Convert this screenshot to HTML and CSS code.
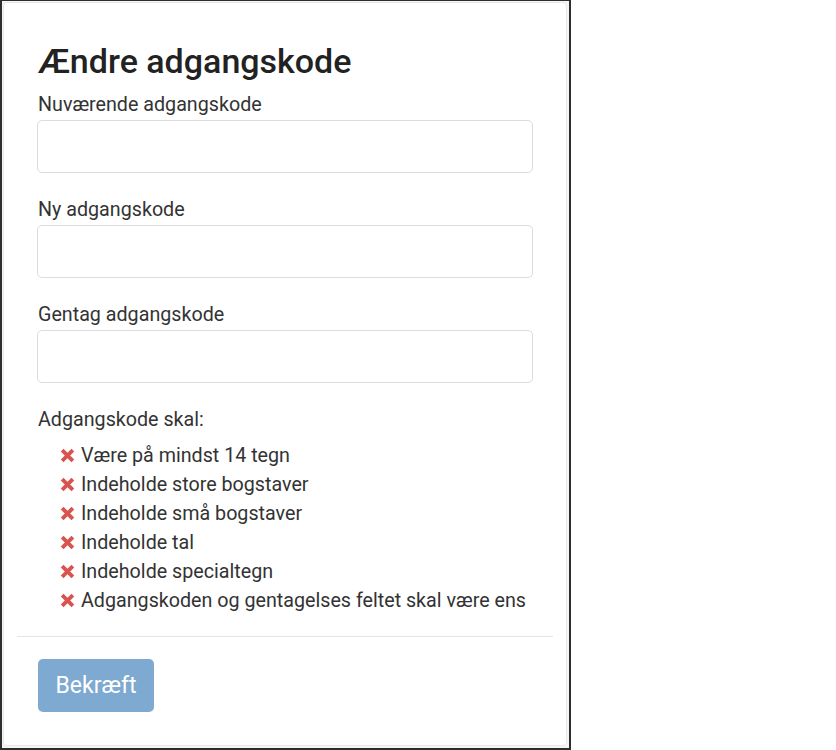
FILE: index.html
```html
<!DOCTYPE html>
<html lang="da">
<head>
<meta charset="utf-8">
<title>Ændre adgangskode</title>
<link rel="stylesheet" href="styles.css">
</head>
<body>
<div class="frame">
  <div class="card">
    <div class="body">
      <h1 class="title">Ændre adgangskode</h1>
      <div class="group">
        <label class="label">Nuværende adgangskode</label>
        <input class="input" type="password">
      </div>
      <div class="group">
        <label class="label">Ny adgangskode</label>
        <input class="input" type="password">
      </div>
      <div class="group">
        <label class="label">Gentag adgangskode</label>
        <input class="input" type="password">
      </div>
      <p class="rules-title">Adgangskode skal:</p>
      <ul class="rules">
        <li><svg class="x" viewBox="0 0 14 14"><path d="M2 2L12 12M12 2L2 12"/></svg>Være på mindst 14 tegn</li>
        <li><svg class="x" viewBox="0 0 14 14"><path d="M2 2L12 12M12 2L2 12"/></svg>Indeholde store bogstaver</li>
        <li><svg class="x" viewBox="0 0 14 14"><path d="M2 2L12 12M12 2L2 12"/></svg>Indeholde små bogstaver</li>
        <li><svg class="x" viewBox="0 0 14 14"><path d="M2 2L12 12M12 2L2 12"/></svg>Indeholde tal</li>
        <li><svg class="x" viewBox="0 0 14 14"><path d="M2 2L12 12M12 2L2 12"/></svg>Indeholde specialtegn</li>
        <li><svg class="x" viewBox="0 0 14 14"><path d="M2 2L12 12M12 2L2 12"/></svg>Adgangskoden og gentagelses feltet skal være ens</li>
      </ul>
    </div>
    <div class="footer">
      <button class="btn" type="button" disabled>Bekræft</button>
    </div>
  </div>
</div>
</body>
</html>
```
FILE: styles.css
```css
html, body {
  margin: 0;
  padding: 0;
  background: #ffffff;
}
body {
  font-family: Roboto, "Liberation Sans", Arial, sans-serif;
  color: #333333;
}
.frame {
  box-sizing: border-box;
  width: 571px;
  height: 750px;
  border: 2px solid #2e2e2e;
  border-top-width: 1px;
  background: #f4f5f6;
  padding: 1px 2px 2px 1px;
}
.card {
  box-sizing: border-box;
  height: 100%;
  background: #ffffff;
  border: 1px solid #e8e8e8;
  border-radius: 4px;
  padding: 0 13px;
}
.body {
  padding: 39px 20px 21px 21px;
  border-bottom: 1px solid #e5e5e5;
}
.title {
  margin: 0 0 11px;
  font-size: 34px;
  font-weight: 500;
  line-height: 38px;
  color: #222222;
}
.group {
  margin-bottom: 23px;
}
.label {
  display: block;
  font-size: 19.7px;
  line-height: 27px;
  margin-bottom: 2px;
  color: #333333;
}
.input {
  display: block;
  box-sizing: border-box;
  width: 496px;
  height: 53px;
  margin: 0 0 0 -1px;
  border: 1px solid #dcdcdc;
  border-radius: 5px;
  background: #ffffff;
  font-size: 18px;
}
.rules-title {
  margin: 0 0 8px;
  font-size: 19.7px;
  line-height: 27px;
}
.rules {
  list-style: none;
  margin: 0;
  padding: 0 0 0 22px;
}
.rules li {
  display: flex;
  align-items: center;
  font-size: 19.7px;
  line-height: 29px;
  color: #333333;
}
.x {
  width: 15px;
  height: 15px;
  margin-right: 6px;
  fill: none;
  stroke: #d9534f;
  stroke-width: 3.6;
}
.footer {
  padding: 22px 21px 0;
}
.btn {
  box-sizing: border-box;
  width: 116px;
  height: 53px;
  border: none;
  border-radius: 5px;
  background: #7ea9d0;
  color: #ffffff;
  font-family: Roboto, "Liberation Sans", Arial, sans-serif;
  font-size: 23px;
  padding: 0;
}
```
